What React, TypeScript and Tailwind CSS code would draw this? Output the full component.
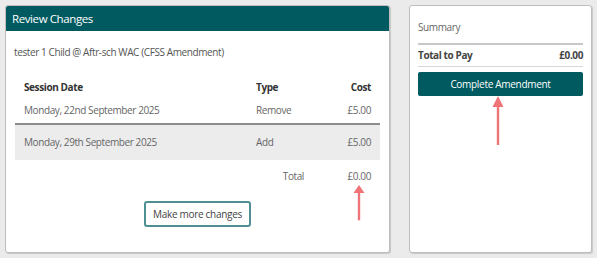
import React from "react";

const Arrow = ({ className }: { className: string }) => (
  <svg className={className} width="14" height="50" viewBox="0 0 14 50" preserveAspectRatio="none">
    <polygon points="7,0 1.5,11 12.5,11" fill="#ef7477" />
    <rect x="5.8" y="10" width="2.4" height="39" fill="#ef7477" />
  </svg>
);

export default function App() {
  return (
    <div
      className="relative w-[597px] h-[258px] bg-[#ebebeb] flex items-start pt-[5px] pl-[5px] gap-[19px] text-[#666]"
      style={{ fontFamily: '"Open Sans", "Noto Sans", sans-serif' }}
    >
      {/* Left panel */}
      <div className="w-[385px] h-[248px] bg-white border border-[#bdbdbd] rounded-[3px] shadow-[1px_1px_1px_rgba(0,0,0,0.15)] overflow-hidden flex flex-col">
        <div className="h-[25px] bg-[#005a5f] text-white text-[11.5px] flex items-center pl-[6px] tracking-[-0.4px]">
          Review Changes
        </div>
        <div className="px-[8px] pt-[14px] text-[10px] tracking-[-0.4px] text-[#555]">
          <div className="leading-[14px]">tester 1 Child @ Aftr-sch WAC (CFSS Amendment)</div>
        </div>
        <div className="mx-[9px] mt-[17px] text-[10px] tracking-[-0.4px]">
          <div className="flex h-[22px] items-center px-[9px] font-bold text-[#333]">
            <div className="flex-1">Session Date</div>
            <div className="w-[80px]">Type</div>
            <div className="w-[35px] text-right">Cost</div>
          </div>
          <div className="flex h-[27px] items-center px-[9px] border-b-2 border-[#8c8c8c]">
            <div className="flex-1">Monday, 22nd September 2025</div>
            <div className="w-[80px]">Remove</div>
            <div className="w-[35px] text-right">£5.00</div>
          </div>
          <div className="flex h-[35px] items-center px-[9px] bg-[#ececed]">
            <div className="flex-1">Monday, 29th September 2025</div>
            <div className="w-[80px]">Add</div>
            <div className="w-[35px] text-right">£5.00</div>
          </div>
          <div className="flex h-[32px] items-center px-[9px]">
            <div className="flex-1 text-right pr-[27px]">Total</div>
            <div className="w-[40px] text-right">£0.00</div>
          </div>
        </div>
        <div className="flex justify-center mt-[9px]">
          <button className="w-[107px] h-[26px] border-2 border-[#4d8f93] rounded-[3px] text-[10px] font-medium text-[#444] tracking-[-0.3px]">
            Make more changes
          </button>
        </div>
      </div>

      {/* Right panel */}
      <div className="w-[183px] h-[248px] bg-white border border-[#bdbdbd] rounded-[3px] shadow-[1px_1px_1px_rgba(0,0,0,0.15)] px-[8px] text-[10px] tracking-[-0.4px]">
        <div className="h-[37px] flex items-end pb-[8px] text-[#666]">Summary</div>
        <div className="h-[2px] bg-[#c8c8c8]" />
        <div className="h-[21px] flex items-center justify-between font-bold text-[#444]">
          <span>Total to Pay</span>
          <span>£0.00</span>
        </div>
        <div className="h-px bg-[#d6d6d6]" />
        <button className="mt-[5px] w-full h-[24px] bg-[#005a5f] text-white rounded-[2px] text-[10px] tracking-[-0.3px]">
          Complete Amendment
        </button>
      </div>

      <Arrow className="absolute left-[491px] top-[96px]" />
      <Arrow className="absolute left-[352px] top-[185px] h-[36px]" />
    </div>
  );
}
